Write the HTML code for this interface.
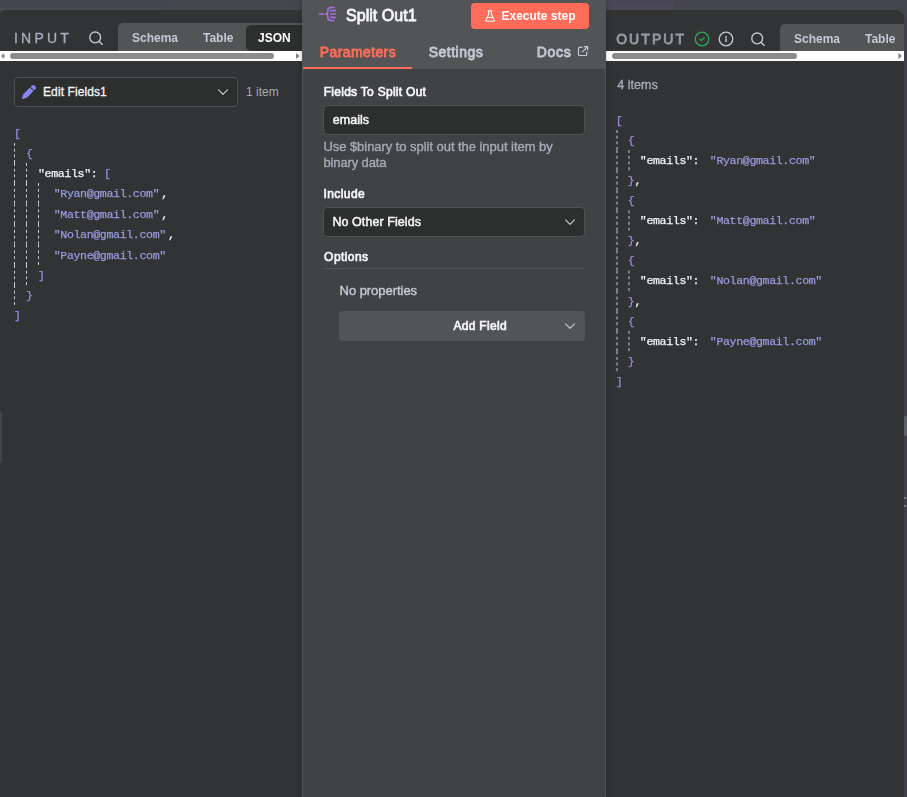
<!DOCTYPE html>
<html lang="en"><head><meta charset="utf-8"><title>Split Out1</title>
<style>
*{box-sizing:border-box;margin:0;padding:0}
html,body{width:907px;height:797px;overflow:hidden;background:#45454f;}
body{position:relative;font-family:"Liberation Sans", Arial, Helvetica, sans-serif;font-size:12px;color:#f4f5f7;-webkit-font-smoothing:antialiased}
.abs{position:absolute}
.gs{will-change:transform}
.t{position:absolute;white-space:nowrap;line-height:1}
.panel{position:absolute;background:#323335;overflow:hidden}
#inp{left:0;top:10px;width:302px;height:787px;border-top-left-radius:5px}
#out{will-change:transform;left:606px;top:10px;width:298px;height:787px;border-top-right-radius:8px}
#main{will-change:transform;z-index:5;box-shadow:0 0 6px rgba(0,0,0,0.22);position:absolute;left:302px;top:0;width:304px;height:797px;background:#414244;border-left:1px solid #535456;border-right:1px solid #535456;overflow:hidden}
#mhead{position:absolute;left:0;top:0;width:304px;height:69px;background:#535456}
.title{font-size:14px;letter-spacing:3px;color:#a6abb7}
.tabs{position:absolute;background:#535456;border-radius:5px 0 0 0}
.tab{position:absolute;font-size:12px;font-weight:bold;color:#c3c9d5;white-space:nowrap;line-height:1}
.sb{position:absolute;background:#fff;height:10px}
.thumb{position:absolute;top:2px;height:6px;border-radius:3px;background:#8b8b8b}
.field{position:absolute;background:#2d2e2e;border:1px solid #505154;border-radius:4px}
.lbl{font-size:12px;font-weight:bold;color:#f4f5f7;letter-spacing:-0.1px}
.mono{position:absolute;white-space:pre;font-family:"Liberation Mono", "DejaVu Sans Mono", monospace;font-size:11.6px;letter-spacing:-0.36px;line-height:20px;height:20px;-webkit-text-stroke:0.25px currentColor}
.k{color:#f4f5f7}
.s{color:#989bdc}
.b{color:#9a8ce0}
svg{position:absolute;overflow:visible}
</style></head>
<body>
<div class="abs" style="left:0;top:8px;width:160px;height:3px;background:#4b4b58"></div><div class="abs" style="left:173px;top:0;width:117px;height:10px;background:#46464f"></div>
<div class="abs" style="left:606px;top:1px;width:69px;height:10px;background:#4a4856;border-radius:0 3px 0 0"></div>
<div class="abs" style="left:904px;top:18px;width:3px;height:779px;background:#403f4b"></div>
<div class="abs" style="left:904px;top:497px;width:2px;height:2px;background:#8b8784;opacity:.8"></div><div class="abs" style="left:904px;top:505px;width:2px;height:2px;background:#8b8784;opacity:.8"></div>
<div class="abs" style="left:904px;top:416px;width:3px;height:20px;background:#5e5e6b;border-radius:1px"></div>
<div id="inp" class="panel">
<div class="t" style="left:13.94px;top:21px;font-size:14px;color:#a9aebb;letter-spacing:3.223px;-webkit-text-stroke:0.3px #a9aebb;will-change:transform;">INPUT</div>
<svg style="left:88px;top:20px" width="16" height="16" viewBox="0 0 16 16" fill="none" stroke="#c3c9d5" stroke-width="1.35" stroke-linecap="round"><circle cx="7.2" cy="7.4" r="5.4"/><path d="M11.2 11.4 L14.3 14.4"/></svg>
<div class="tabs" style="left:118px;top:13px;width:190px;height:30px"></div>
<div class="abs" style="left:246px;top:15px;width:60px;height:26px;background:#2d2e2e;border-radius:4px 0 0 4px;border-radius:5px"></div>
<div class="tab gs" style="left:132px;top:22px">Schema</div>
<div class="tab gs" style="left:203px;top:22px">Table</div>
<div class="tab gs" style="left:257.5px;top:22px;color:#fff">JSON</div>
<div class="sb" style="left:0;top:41px;width:302px"><div class="thumb" style="left:10px;width:264px"></div><svg style="left:0;top:0" width="302" height="10"><path d="M0.8 5 L4.4 2 L4.4 8 Z" fill="#858585"/><path d="M299.6 5 L296 2 L296 8 Z" fill="#858585"/></svg></div>
<div class="field" style="left:14px;top:67px;width:224px;height:30px"></div>
<svg style="left:22px;top:75px" width="14" height="14" viewBox="0 0 512 512"><path fill="#8587ef" d="M362.7 19.3L314.3 67.7 444.3 197.7l48.4-48.4c25-25 25-65.5 0-90.500L453.300 19.300c-25-25-65.500-25-90.500 0zm-71 71L58.600 323.500c-10.400 10.400-18 23.300-22.200 37.400L1 481.200C-1.500 489.700 .8 498.800 7 505s15.300 8.500 23.700 6.100l120.300-35.400c14.100-4.200 27-11.800 37.400-22.200L421.700 220.300 291.700 90.300z"/></svg>
<div class="t " style="left:43px;top:76px;font-size:12px;color:#f4f5f7;letter-spacing:0.1px;-webkit-text-stroke:0.3px #f4f5f7">Edit Fields1</div>
<svg style="left:216px;top:76px" width="14" height="12" viewBox="0 0 14 12" fill="none" stroke="#c3c9d5" stroke-width="1.15" stroke-linecap="round" stroke-linejoin="round"><path d="M2.6 3.8 L7 8.3 L11.4 3.8"/></svg>
<div class="t " style="left:246px;top:76px;font-size:12px;color:#a6abb7">1 item</div>
<svg style="left:0;top:0" width="300" height="400" fill="none" stroke="#c5cad3" stroke-width="1" shape-rendering="auto"><path d="M14.50 133.00 V153.00" stroke-dasharray="3 2.667"/><path d="M14.50 153.00 V173.00" stroke-dasharray="3 2.667"/><path d="M26.50 153.00 V173.00" stroke-dasharray="3 2.667"/><path d="M14.50 173.00 V193.50" stroke-dasharray="3 2.833"/><path d="M26.50 173.00 V193.50" stroke-dasharray="3 2.833"/><path d="M38.50 173.00 V193.50" stroke-dasharray="3 2.833"/><path d="M14.50 193.50 V214.00" stroke-dasharray="3 2.833"/><path d="M26.50 193.50 V214.00" stroke-dasharray="3 2.833"/><path d="M38.50 193.50 V214.00" stroke-dasharray="3 2.833"/><path d="M14.50 214.00 V234.50" stroke-dasharray="3 2.833"/><path d="M26.50 214.00 V234.50" stroke-dasharray="3 2.833"/><path d="M38.50 214.00 V234.50" stroke-dasharray="3 2.833"/><path d="M14.50 234.50 V255.00" stroke-dasharray="3 2.833"/><path d="M26.50 234.50 V255.00" stroke-dasharray="3 2.833"/><path d="M38.50 234.50 V255.00" stroke-dasharray="3 2.833"/><path d="M14.50 255.00 V275.00" stroke-dasharray="3 2.667"/><path d="M26.50 255.00 V275.00" stroke-dasharray="3 2.667"/><path d="M14.50 275.00 V295.00" stroke-dasharray="3 2.667"/></svg><div class="mono b" style="left:14.00px;top:114.00px">[</div><div class="mono b" style="left:26.00px;top:134.00px">{</div><div class="mono k" style="left:38.00px;top:154.00px">&quot;emails&quot;</div><div class="mono k" style="left:90.80px;top:154.00px">:</div><div class="mono b" style="left:104.00px;top:154.00px">[</div><div class="mono s" style="left:53.70px;top:174.00px">&quot;Ryan@gmail.com&quot;</div><div class="mono k" style="left:161.30px;top:174.00px">,</div><div class="mono s" style="left:53.70px;top:194.50px">&quot;Matt@gmail.com&quot;</div><div class="mono k" style="left:161.30px;top:194.50px">,</div><div class="mono s" style="left:53.70px;top:215.00px">&quot;Nolan@gmail.com&quot;</div><div class="mono k" style="left:167.90px;top:215.00px">,</div><div class="mono s" style="left:53.70px;top:235.50px">&quot;Payne@gmail.com&quot;</div><div class="mono b" style="left:38.00px;top:256.00px">]</div><div class="mono b" style="left:26.00px;top:276.00px">}</div><div class="mono b" style="left:14.00px;top:296.00px">]</div>
</div>
<div id="out" class="panel">
<div class="t" style="left:10.17px;top:22.200000000000003px;font-size:14px;color:#969aa6;letter-spacing:2.074px;-webkit-text-stroke:0.8px #969aa6;">OUTPUT</div>
<svg style="left:88px;top:21px" width="16" height="16" viewBox="0 0 16 16" fill="none" stroke="#2fa75a" stroke-width="1.3" stroke-linecap="round" stroke-linejoin="round"><circle cx="8" cy="8" r="6.8"/><path d="M5.9 8.2 L7.4 9.6 L10.1 6.8"/></svg>
<svg style="left:112px;top:21px" width="16" height="16" viewBox="0 0 16 16" fill="none" stroke="#c3c9d5" stroke-width="1.3" stroke-linecap="round"><circle cx="8" cy="8" r="6.8"/><path d="M8 7.500 V10.900" stroke-width="1.500" stroke-linecap="butt"/><circle cx="8" cy="5.900" r="0.350" fill="#c3c9d5"/></svg>
<svg style="left:144px;top:21px" width="16" height="16" viewBox="0 0 16 16" fill="none" stroke="#c3c9d5" stroke-width="1.35" stroke-linecap="round"><circle cx="7.2" cy="7.4" r="5.4"/><path d="M11.2 11.4 L14.3 14.4"/></svg>
<div class="tabs" style="left:174px;top:14px;width:140px;height:30px"></div>
<div class="tab" style="left:188px;top:23px">Schema</div>
<div class="tab" style="left:259px;top:23px">Table</div>
<div class="sb" style="left:0;top:41px;width:298px"><div class="thumb" style="left:6px;width:185px"></div><svg style="left:0;top:0" width="298" height="10"><path d="M296 5 L292.400 2 L292.400 8 Z" fill="#858585"/></svg></div>
<div class="t" style="left:11.32px;top:69.0px;font-size:12.5px;color:#a6abb7;letter-spacing:0.004px;-webkit-text-stroke:0.35px #a6abb7;">4 items</div>
<svg style="left:0;top:0" width="300" height="400" fill="none" stroke="#c5cad3" stroke-width="1" shape-rendering="auto"><path d="M11.00 120.00 V140.00" stroke-dasharray="3 2.667"/><path d="M11.00 140.00 V160.30" stroke-dasharray="3 2.767"/><path d="M23.00 140.00 V160.30" stroke-dasharray="3 2.767"/><path d="M11.00 160.30 V180.30" stroke-dasharray="3 2.667"/><path d="M11.00 180.30 V200.30" stroke-dasharray="3 2.667"/><path d="M11.00 200.30 V220.60" stroke-dasharray="3 2.767"/><path d="M23.00 200.30 V220.60" stroke-dasharray="3 2.767"/><path d="M11.00 220.60 V240.60" stroke-dasharray="3 2.667"/><path d="M11.00 240.60 V260.60" stroke-dasharray="3 2.667"/><path d="M11.00 260.60 V280.90" stroke-dasharray="3 2.767"/><path d="M23.00 260.60 V280.90" stroke-dasharray="3 2.767"/><path d="M11.00 280.90 V300.90" stroke-dasharray="3 2.667"/><path d="M11.00 300.90 V320.90" stroke-dasharray="3 2.667"/><path d="M11.00 320.90 V341.20" stroke-dasharray="3 2.767"/><path d="M23.00 320.90 V341.20" stroke-dasharray="3 2.767"/><path d="M11.00 341.20 V361.20" stroke-dasharray="3 2.667"/></svg><div class="mono b" style="left:9.80px;top:100.80px">[</div><div class="mono b" style="left:21.80px;top:120.80px">{</div><div class="mono k" style="left:33.80px;top:140.80px">&quot;emails&quot;</div><div class="mono k" style="left:86.60px;top:140.80px">:</div><div class="mono s" style="left:103.80px;top:140.80px">&quot;Ryan@gmail.com&quot;</div><div class="mono b" style="left:21.80px;top:161.10px">}</div><div class="mono k" style="left:28.40px;top:161.10px">,</div><div class="mono b" style="left:21.80px;top:181.10px">{</div><div class="mono k" style="left:33.80px;top:201.10px">&quot;emails&quot;</div><div class="mono k" style="left:86.60px;top:201.10px">:</div><div class="mono s" style="left:103.80px;top:201.10px">&quot;Matt@gmail.com&quot;</div><div class="mono b" style="left:21.80px;top:221.40px">}</div><div class="mono k" style="left:28.40px;top:221.40px">,</div><div class="mono b" style="left:21.80px;top:241.40px">{</div><div class="mono k" style="left:33.80px;top:261.40px">&quot;emails&quot;</div><div class="mono k" style="left:86.60px;top:261.40px">:</div><div class="mono s" style="left:103.80px;top:261.40px">&quot;Nolan@gmail.com&quot;</div><div class="mono b" style="left:21.80px;top:281.70px">}</div><div class="mono k" style="left:28.40px;top:281.70px">,</div><div class="mono b" style="left:21.80px;top:301.70px">{</div><div class="mono k" style="left:33.80px;top:321.70px">&quot;emails&quot;</div><div class="mono k" style="left:86.60px;top:321.70px">:</div><div class="mono s" style="left:103.80px;top:321.70px">&quot;Payne@gmail.com&quot;</div><div class="mono b" style="left:21.80px;top:342.00px">}</div><div class="mono b" style="left:9.80px;top:362.00px">]</div>
</div>
<div id="main"><div id="mhead"></div>
<svg style="left:15px;top:5px" width="20" height="18" viewBox="318 5 20 18" fill="none" stroke="#a46fe0" stroke-width="1.7" stroke-linecap="round" stroke-linejoin="round"><path d="M319.600 14 H323.400"/><path d="M334 7.500 H331 Q327.800 7.500 327.800 10.400 V11.400 Q327.800 14 325.500 14 Q327.800 14 327.800 16.600 V17.600 Q327.800 20.500 331 20.500 H334"/><path d="M330.800 10.700 H335.400 M330.800 14 H335.400 M330.800 17.300 H335.400"/></svg>
<div class="t" style="left:42.98px;top:7.5px;font-size:16px;color:#f4f5f7;letter-spacing:0.044px;-webkit-text-stroke:0.8px #f4f5f7;">Split Out1</div>
<div class="abs" style="left:168px;top:3px;width:118px;height:26px;background:#ff6d5a;border-radius:4px"></div>
<svg style="left:181px;top:9px" width="12" height="14" viewBox="484 9 12 14" fill="none" stroke="#fff" stroke-width="1.1" stroke-linecap="round" stroke-linejoin="round"><path d="M488 10.7 H492.1 M488.7 10.7 V14.3 L486 19.700 Q485.5 21.300 487.100 21.300 H493.100 Q494.700 21.300 494.100 19.700 L491.400 14.300 V10.700 M487.300 17.500 H492.800"/></svg>
<div class="t " style="left:198.5px;top:10px;font-size:12px;font-weight:bold;color:#fff">Execute step</div>
<div class="t" style="left:16.78px;top:45.15px;font-size:14px;color:#ff6d5a;letter-spacing:0.392px;-webkit-text-stroke:0.8px #ff6d5a;">Parameters</div>
<div class="t" style="left:125.67px;top:45.15px;font-size:14px;color:#c3c9d5;letter-spacing:0.516px;-webkit-text-stroke:0.8px #c3c9d5;">Settings</div>
<div class="t" style="left:233.78px;top:45.15px;font-size:14px;color:#c3c9d5;letter-spacing:0.663px;-webkit-text-stroke:0.8px #c3c9d5;">Docs</div>
<svg style="left:274px;top:45px" width="12" height="12" viewBox="0 0 12 12" fill="none" stroke="#c3c9d5" stroke-width="1.2" stroke-linecap="round" stroke-linejoin="round"><path d="M5 2.300 H2.600 Q1.500 2.300 1.500 3.400 V9.400 Q1.500 10.500 2.600 10.500 H8.600 Q9.700 10.500 9.700 9.400 V7 M7.200 1.600 H10.600 V5 M10.600 1.600 L5.400 6.800"/></svg>
<div class="abs" style="left:0;top:67px;width:109px;height:2px;background:#ff6d5a"></div>
<div class="t" style="left:20.69px;top:85.85px;font-size:12px;color:#f4f5f7;letter-spacing:0.282px;-webkit-text-stroke:0.7px #f4f5f7;">Fields To Split Out</div>
<div class="field" style="left:20px;top:105px;width:262px;height:30px"></div>
<div class="t" style="left:29.85px;top:113.9px;font-size:12.5px;color:#f4f5f7;letter-spacing:0.022px;-webkit-text-stroke:0.5px #f4f5f7;">emails</div>
<div class="t" style="left:20.40px;top:140.1px;font-size:13px;color:#a6abb7;letter-spacing:-0.048px;-webkit-text-stroke:0.35px #a6abb7;">Use $binary to split out the input item by</div>
<div class="t" style="left:20.53px;top:156.1px;font-size:13px;color:#a6abb7;letter-spacing:-0.139px;-webkit-text-stroke:0.35px #a6abb7;">binary data</div>
<div class="t" style="left:20.57px;top:188.3px;font-size:12px;color:#f4f5f7;letter-spacing:0.393px;-webkit-text-stroke:0.7px #f4f5f7;">Include</div>
<div class="field" style="left:20px;top:207px;width:262px;height:30px"></div>
<div class="t" style="left:29.40px;top:215.6px;font-size:12.5px;color:#f4f5f7;letter-spacing:0.077px;-webkit-text-stroke:0.5px #f4f5f7;">No Other Fields</div>
<svg style="left:260px;top:216px" width="14" height="12" viewBox="0 0 14 12" fill="none" stroke="#c3c9d5" stroke-width="1.15" stroke-linecap="round" stroke-linejoin="round"><path d="M2.6 3.8 L7 8.3 L11.4 3.8"/></svg>
<div class="t" style="left:21.11px;top:250.8px;font-size:12px;color:#f4f5f7;letter-spacing:0.437px;-webkit-text-stroke:0.7px #f4f5f7;">Options</div>
<div class="abs" style="left:20px;top:268px;width:262px;height:1px;background:#55565a"></div>
<div class="t" style="left:36.56px;top:283.8px;font-size:13px;color:#c3c9d5;letter-spacing:-0.043px;-webkit-text-stroke:0.4px #c3c9d5;">No properties</div>
<div class="abs" style="left:36px;top:311px;width:246px;height:30px;background:#535456;border-radius:4px"></div>
<div class="t" style="left:150.45px;top:319.7px;font-size:12px;color:#f4f5f7;letter-spacing:0.304px;-webkit-text-stroke:0.7px #f4f5f7;">Add Field</div>
<svg style="left:260px;top:320px" width="14" height="12" viewBox="0 0 14 12" fill="none" stroke="#c3c9d5" stroke-width="1.15" stroke-linecap="round" stroke-linejoin="round"><path d="M2.6 3.8 L7 8.3 L11.4 3.8"/></svg>
</div>
<div class="abs" style="left:0;top:412px;width:2px;height:51px;background:#444548;border-radius:0 2px 2px 0"></div>
</body></html>
